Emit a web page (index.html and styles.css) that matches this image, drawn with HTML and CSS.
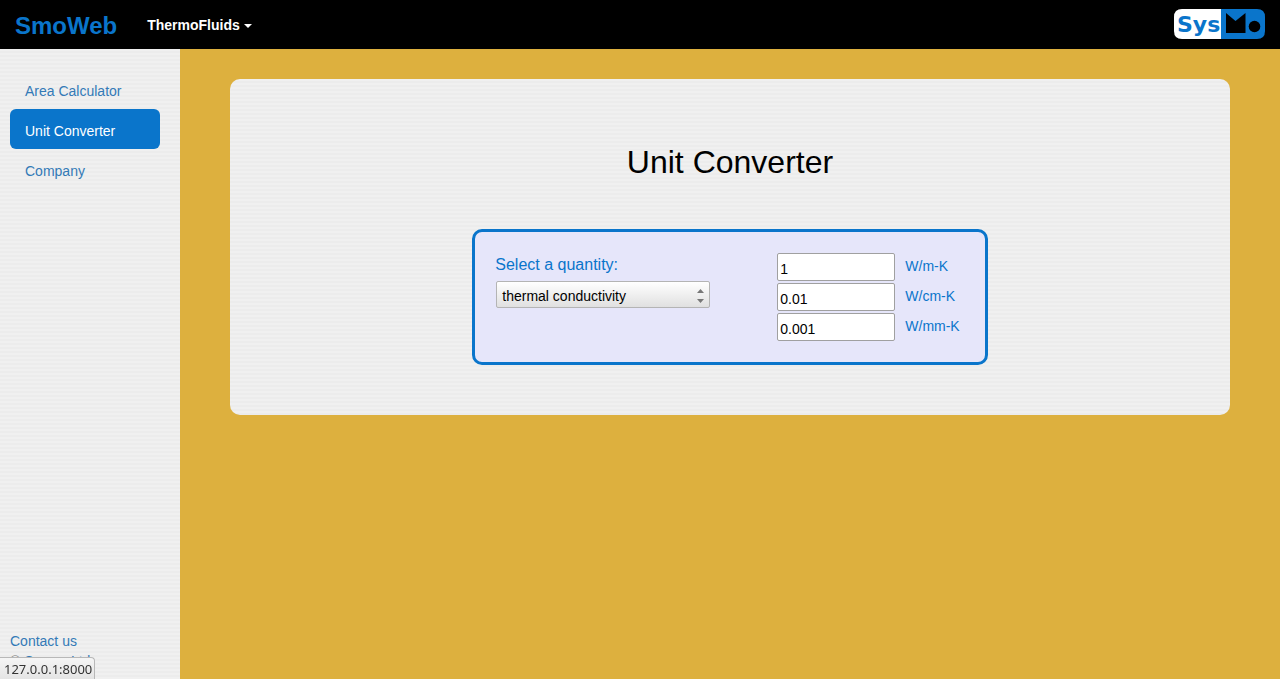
FILE: index.html
```html
<!DOCTYPE html>
<html lang="en">
<head>
<meta charset="utf-8">
<title>SmoWeb - Unit Converter</title>
<link rel="stylesheet" href="styles.css">
</head>
<body>
<header class="navbar">
  <a class="brand" href="#">SmoWeb</a>
  <button class="nav-menu" type="button">ThermoFluids<span class="caret"></span></button>
  <a class="logo" href="#" aria-label="SysMo">
    <svg width="92" height="30" viewBox="0 0 92 30">
      <path d="M8 0H47V30H8Q0 30 0 22V8Q0 0 8 0Z" fill="#fff"/>
      <path d="M47 0H83Q91 0 91 8V22Q91 30 83 30H47Z" fill="#0a75cb"/>
      <path d="M52 4L61.500 12L71.500 4V24H52Z" fill="#000"/>
      <circle cx="80.500" cy="17.500" r="5.800" fill="#000"/>
      <text class="logo-text" x="3" y="23">Sys</text>
    </svg>
  </a>
</header>
<div class="page">
  <aside class="sidebar">
    <nav class="side-nav">
      <a class="side-link" href="#">Area Calculator</a>
      <a class="side-link active" href="#">Unit Converter</a>
      <a class="side-link" href="#">Company</a>
    </nav>
    <footer class="footer">
      <a href="#">Contact us</a>
      <div>© <a href="#">Sysmo Ltd.</a></div>
    </footer>
  </aside>
  <main class="main">
    <section class="panel">
      <h1 class="title">Unit Converter</h1>
      <form class="converter">
        <div class="quantity">
          <label class="quantity-label" for="quantity">Select a quantity:</label>
          <div class="select-wrap">
            <select class="select" id="quantity"><option>thermal conductivity</option></select>
            <svg class="arrows" width="7" height="14" viewBox="0 0 7 14"><path d="M0 4L3.500 0L7 4ZM0 10H7L3.500 14Z" fill="#777"/></svg>
          </div>
        </div>
        <div class="values">
          <div class="value-row"><input class="value" id="u1" type="text" value="1"><label for="u1">W/m-K</label></div>
          <div class="value-row"><input class="value" id="u2" type="text" value="0.01"><label for="u2">W/cm-K</label></div>
          <div class="value-row"><input class="value" id="u3" type="text" value="0.001"><label for="u3">W/mm-K</label></div>
        </div>
      </form>
    </section>
  </main>
</div>
<div class="status">127.0.0.1:8000</div>
</body>
</html>
```
FILE: styles.css
```css
* { box-sizing: border-box; }
body {
  margin: 0;
  min-height: 100vh;
  display: flex;
  flex-direction: column;
  background: #ddb03e;
  color: #808080;
  font: 14px/20px "Liberation Sans", Arial, sans-serif;
}
a { color: #337ab7; text-decoration: none; }
.navbar {
  display: flex;
  align-items: center;
  height: 49px;
  padding: 0 14px 0 15px;
  background: #000;
}
.brand { color: #0a75cb; font-size: 24px; font-weight: bold; line-height: 28px; padding-top: 2px; }
.nav-menu {
  display: flex;
  align-items: center;
  gap: 4px;
  margin-left: 30px;
  padding: 0;
  border: 0;
  background: none;
  color: #fff;
  font: bold 14px/20px "Liberation Sans", Arial, sans-serif;
}
.caret { margin-top: 2px; border: 4px solid transparent; border-top-color: #fff; border-bottom: 0; }
.logo { display: flex; margin-left: auto; padding-bottom: 2px; }
.logo-text { font: bold 22px "DejaVu Sans", sans-serif; fill: #0a75cb; }
.page { flex: 1; display: flex; }
.sidebar, .panel {
  background: repeating-linear-gradient(#f0f0f0 0, #f0f0f0 2px, #ececec 2px, #ececec 4px);
}
.sidebar {
  width: 180px;
  display: flex;
  flex-direction: column;
  justify-content: space-between;
  padding: 20px 20px 8px 10px;
}
.side-nav { display: flex; flex-direction: column; }
.side-link { padding: 12px 15px 8px; border-radius: 6px; }
.side-link.active { background: #0a75cb; color: #fff; }
.main { flex: 1; padding: 30px 50px; }
.panel {
  display: flex;
  flex-direction: column;
  align-items: center;
  padding: 65px 20px 50px;
  border-radius: 10px;
}
.title { margin: 0 0 49px; color: #000; font-size: 32px; font-weight: normal; line-height: 36px; }
.converter {
  display: flex;
  gap: 67px;
  padding: 20px 25px 21px 20px;
  border: 3px solid #0a75cb;
  border-radius: 10px;
  background: #e6e6fa;
  color: #0a75cb;
}
.quantity { display: flex; flex-direction: column; gap: 6px; }
.quantity-label { padding-top: 3px; font-size: 16px; line-height: 20px; }
.select-wrap { position: relative; width: 215px; padding-left: 1px; }
.select {
  display: block;
  width: 100%;
  height: 27px;
  padding: 2px 5px 0;
  appearance: none;
  border: 1px solid #b4b4b4;
  border-radius: 2px;
  background: linear-gradient(#fff, #e0e0e0);
  color: #000;
  font: inherit;
}
.arrows { position: absolute; right: 6px; top: 8px; }
.values { display: flex; flex-direction: column; gap: 2px; padding-top: 1px; }
.value-row { display: flex; gap: 10px; }
.value-row label { line-height: 26px; }
.value {
  width: 118px;
  height: 28px;
  padding: 4px 2px 0;
  border: 1px solid #a0a0a0;
  border-radius: 2px;
  background: #fff;
  color: #000;
  font: inherit;
}
.status {
  position: fixed;
  left: 0;
  bottom: 0;
  padding: 1px 2px 0 4px;
  border: 1px solid #b8b8b8;
  border-width: 1px 1px 0 0;
  border-radius: 0 4px 0 0;
  background: linear-gradient(#f5f5f5, #e4e4e4);
  color: #333;
  font: 13px/20px "Noto Sans", sans-serif;
}
```
